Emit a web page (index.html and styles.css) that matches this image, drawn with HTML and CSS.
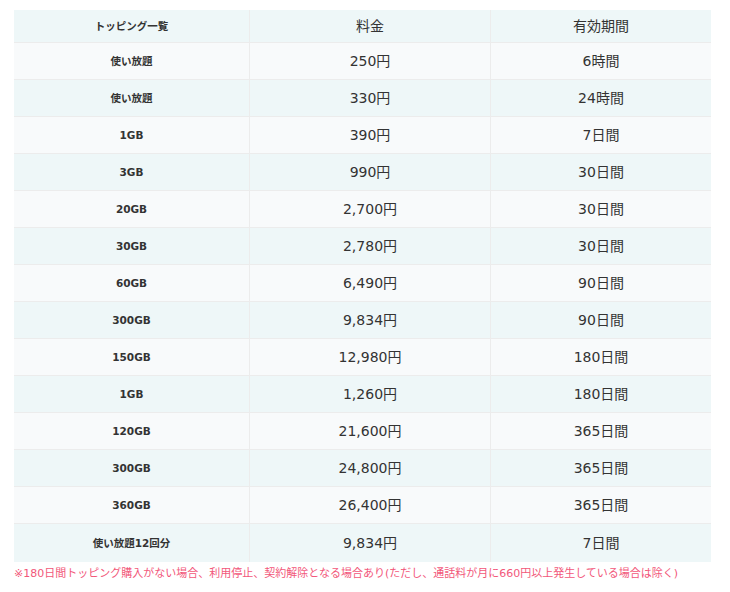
FILE: index.html
```html
<!DOCTYPE html>
<html lang="ja">
<head>
<meta charset="utf-8">
<link rel="stylesheet" href="styles.css">
</head>
<body>
<div class="wrap">
<table class="tbl">
<thead>
<tr><th class="c1">トッピング一覧</th><th class="c2">料金</th><th class="c3">有効期間</th></tr>
</thead>
<tbody>
<tr><td class="c1">使い放題</td><td>250円</td><td>6時間</td></tr>
<tr><td class="c1">使い放題</td><td>330円</td><td>24時間</td></tr>
<tr><td class="c1">1GB</td><td>390円</td><td>7日間</td></tr>
<tr><td class="c1">3GB</td><td>990円</td><td>30日間</td></tr>
<tr><td class="c1">20GB</td><td>2,700円</td><td>30日間</td></tr>
<tr><td class="c1">30GB</td><td>2,780円</td><td>30日間</td></tr>
<tr><td class="c1">60GB</td><td>6,490円</td><td>90日間</td></tr>
<tr><td class="c1">300GB</td><td>9,834円</td><td>90日間</td></tr>
<tr><td class="c1">150GB</td><td>12,980円</td><td>180日間</td></tr>
<tr><td class="c1">1GB</td><td>1,260円</td><td>180日間</td></tr>
<tr><td class="c1">120GB</td><td>21,600円</td><td>365日間</td></tr>
<tr><td class="c1">300GB</td><td>24,800円</td><td>365日間</td></tr>
<tr><td class="c1">360GB</td><td>26,400円</td><td>365日間</td></tr>
<tr><td class="c1 last">使い放題12回分</td><td class="last">9,834円</td><td class="last">7日間</td></tr>
</tbody>
</table>
<p class="note">※180日間トッピング購入がない場合、利用停止、契約解除となる場合あり(ただし、通話料が月に660円以上発生している場合は除く)</p>
</div>
</body>
</html>
```

FILE: styles.css
```css
html, body {
  margin: 0;
  padding: 0;
  background: #ffffff;
}
body {
  font-family: "DejaVu Sans", "Noto Sans CJK JP", sans-serif;
  color: #333333;
}
.wrap {
  padding: 10px 0 0 14px;
}
.tbl {
  width: 697px;
  border-collapse: collapse;
  table-layout: fixed;
}
.tbl th, .tbl td {
  text-align: center;
  vertical-align: middle;
  padding: 0;
  border-top: 1px solid #ececec;
  border-left: 1px solid #ececec;
  font-size: 14px;
  font-weight: normal;
  line-height: 1;
}
.tbl tr > :first-child {
  border-left: none;
}
.tbl thead th {
  border-top: none;
  height: 32px;
  background: #eef7f8;
}
.tbl tbody td {
  height: 36px;
}
.tbl tbody td.last {
  height: 38px;
}
.tbl tbody tr:nth-child(odd) td {
  background: #f8fafb;
}
.tbl tbody tr:nth-child(even) td {
  background: #eef7f8;
}
.tbl .c1 {
  width: 235px;
  font-size: 10.5px;
  font-weight: bold;
}
.tbl .c2 {
  width: 240px;
}
.tbl th.c1 {
  font-weight: bold;
}
.note {
  margin: 4px 0 0 0;
  font-size: 11px;
  line-height: 16px;
  color: #f2577a;
  white-space: nowrap;
}
```
